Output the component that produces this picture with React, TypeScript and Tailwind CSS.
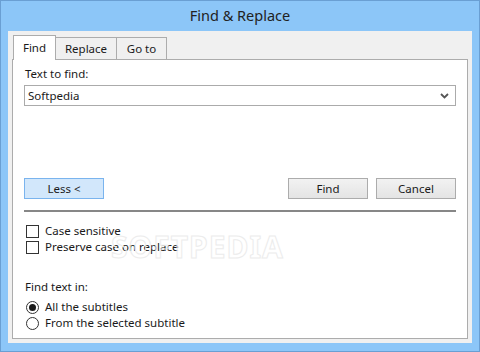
import React from "react";

function Checkbox({ label }: { label: string }) {
  return (
    <div className="flex items-center h-[16px]">
      <span className="w-[13px] h-[13px] border border-[#333333] bg-white ml-[2px]" />
      <span className="ml-[6px]">{label}</span>
    </div>
  );
}

function Radio({ label, checked }: { label: string; checked?: boolean }) {
  return (
    <div className="flex items-center h-[16px]">
      <span className="w-[13px] h-[13px] rounded-full border border-[#333333] bg-white ml-[2px] flex items-center justify-center">
        {checked && <span className="w-[7px] h-[7px] rounded-full bg-[#1a1a1a]" />}
      </span>
      <span className="ml-[6px]">{label}</span>
    </div>
  );
}

export default function App() {
  const tabs = ["Find", "Replace", "Go to"];

  return (
    <div
      className="w-[480px] h-[352px] bg-[#8cc6f8] border border-[#6a9fd3] flex flex-col text-[11.5px] text-[#1a1a1a]"
      style={{ fontFamily: '"Noto Sans", "Open Sans", sans-serif' }}
    >
      <div className="h-[30px] flex items-center justify-center text-[14.5px] text-[#222222]">
        Find &amp; Replace
      </div>

      <div className="mx-[7px] mb-[8px] flex-1 bg-[#f0f0f0] px-[4px] pt-[4px] pb-[4px] flex flex-col">
        <div className="flex items-end h-[24px] pl-[1px]">
          {tabs.map((t, i) =>
            i === 0 ? (
              <div
                key={t}
                className="h-[25px] w-[43px] bg-white border border-[#acacac] border-b-0 flex items-center justify-center relative z-10 -mb-px"
              >
                {t}
              </div>
            ) : (
              <div
                key={t}
                className={`h-[22px] bg-[#f0f0f0] border border-[#acacac] border-b-0 border-l-0 flex items-center justify-center ${
                  i === 1 ? "w-[61px]" : "w-[50px]"
                }`}
              >
                {t}
              </div>
            )
          )}
        </div>

        <div className="flex-1 bg-white border border-[#acacac] px-[11px] flex flex-col relative">
          <div className="mt-[5px] h-[17px] leading-[17px] pl-[1px]">Text to find:</div>
          <div className="mt-[3px] h-[21px] border border-[#ababab] flex items-center justify-between pl-[3px] pr-[6px]">
            <span>Softpedia</span>
            <svg width="9" height="6" viewBox="0 0 9 6">
              <path d="M1 1 L4.5 4.5 L8 1" fill="none" stroke="#555555" strokeWidth="1.8" />
            </svg>
          </div>

          <div className="mt-[72px] flex items-center">
            <button className="w-[80px] h-[21px] bg-[#d2e7fb] border border-[#7ab4ee] flex items-center justify-center">
              Less &lt;
            </button>
            <div className="flex-1" />
            <button className="w-[80px] h-[21px] bg-gradient-to-b from-[#f2f2f2] to-[#e4e4e4] border border-[#acacac] flex items-center justify-center">
              Find
            </button>
            <button className="ml-[8px] w-[80px] h-[21px] bg-gradient-to-b from-[#f2f2f2] to-[#e4e4e4] border border-[#acacac] flex items-center justify-center">
              Cancel
            </button>
          </div>

          <div className="mt-[11px] h-[2px] bg-[#878787]" />

          <div className="mt-[11px] flex flex-col">
            <Checkbox label="Case sensitive" />
            <Checkbox label="Preserve case on replace" />
          </div>

          <div className="mt-[23px] h-[17px] leading-[17px] pl-[1px]">Find text in:</div>
          <div className="mt-[4px] flex flex-col">
            <Radio label="All the subtitles" checked />
            <Radio label="From the selected subtitle" />
          </div>

          <div className="absolute left-[98px] top-[164px] text-[30px] font-bold tracking-[1px] text-transparent [-webkit-text-stroke:1px_#ececec] pointer-events-none select-none">
            SOFTPEDIA
          </div>
        </div>
      </div>
    </div>
  );
}
